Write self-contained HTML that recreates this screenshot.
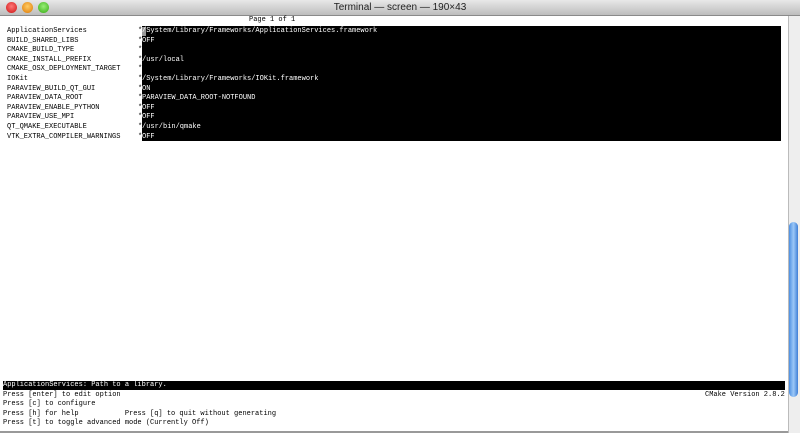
<!DOCTYPE html>
<html><head><style>
*{margin:0;padding:0}
body{width:800px;height:433px;overflow:hidden;background:#fff;position:relative;font-family:"Liberation Mono",monospace;font-size:7px;color:#000}
.tb{position:absolute;left:0;top:0;width:800px;height:15px;background:linear-gradient(#e8e8e8,#bdbdbd);border-bottom:1px solid #8a8a8a;font-family:"Liberation Sans",sans-serif;font-size:10px;text-align:center;line-height:15px;color:#222}
.b{position:absolute;top:2px;width:11px;height:11px;border-radius:50%}
.t{position:absolute;white-space:pre;line-height:9.6px}
.blk{position:absolute;left:142px;top:26px;width:639px;height:115px;background:#000}
.sb{position:absolute;left:788px;top:16px;width:12px;height:417px;background:#eee;border-left:1px solid #bbb}
.th{position:absolute;left:789px;top:222px;width:9px;height:175px;border-radius:5px;background:linear-gradient(90deg,#4d8fe0,#9cc8f8,#3f7fd6)}
</style></head><body>
<div class="tb">Terminal — screen — 190×43</div>
<div class="b" style="left:6px;background:radial-gradient(circle at 50% 40%,#f77,#c11)"></div>
<div class="b" style="left:22px;background:radial-gradient(circle at 50% 40%,#fc6,#d70)"></div>
<div class="b" style="left:38px;background:radial-gradient(circle at 50% 40%,#9e7,#3a1)"></div>
<div class="t" style="left:249px;top:16px">Page 1 of 1</div>
<div class="blk"></div>
<div class="t" style="left:7px;top:27px">ApplicationServices
BUILD_SHARED_LIBS
CMAKE_BUILD_TYPE
CMAKE_INSTALL_PREFIX
CMAKE_OSX_DEPLOYMENT_TARGET
IOKit
PARAVIEW_BUILD_QT_GUI
PARAVIEW_DATA_ROOT
PARAVIEW_ENABLE_PYTHON
PARAVIEW_USE_MPI
QT_QMAKE_EXECUTABLE
VTK_EXTRA_COMPILER_WARNINGS</div>
<div class="t" style="left:138px;top:27px">*
*
*
*
*
*
*
*
*
*
*
*</div>
<div style="position:absolute;left:142px;top:27px;width:4px;height:9px;background:#999"></div>
<div class="t" style="left:142px;top:27px;color:#fff">/System/Library/Frameworks/ApplicationServices.framework
OFF

/usr/local

/System/Library/Frameworks/IOKit.framework
ON
PARAVIEW_DATA_ROOT-NOTFOUND
OFF
OFF
/usr/bin/qmake
OFF</div>
<div style="position:absolute;left:3px;top:381px;width:782px;height:9px;background:#000"></div>
<div class="t" style="left:3px;top:381px;color:#fff">ApplicationServices: Path to a library.</div>
<div class="t" style="left:3px;top:390.5px">Press [enter] to edit option
Press [c] to configure
Press [h] for help           Press [q] to quit without generating
Press [t] to toggle advanced mode (Currently Off)</div>
<div class="t" style="left:705px;top:390.5px">CMake Version 2.8.2</div>
<div class="sb"></div>
<div class="th"></div>
<div style="position:absolute;left:0;top:431px;width:788px;height:2px;background:#999"></div>
</body></html>
